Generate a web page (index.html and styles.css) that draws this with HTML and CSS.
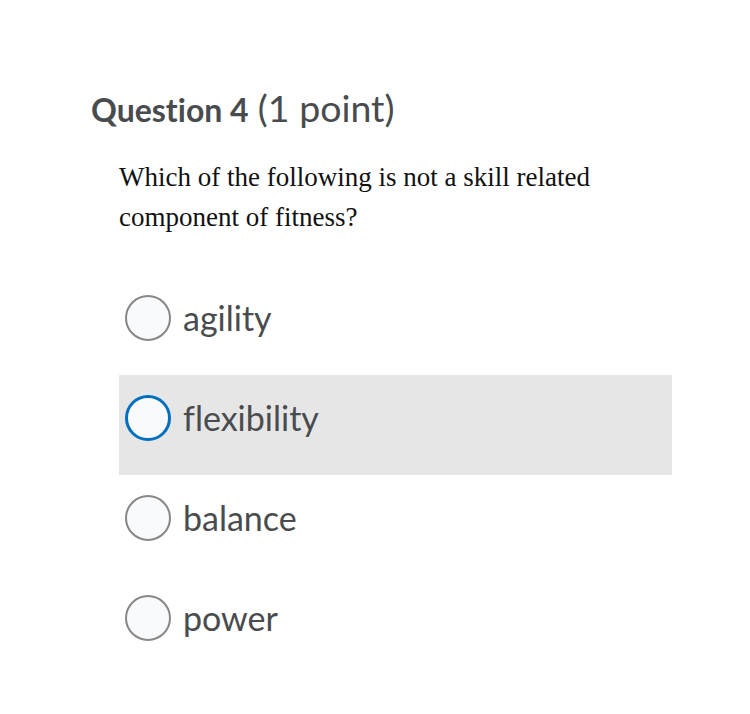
FILE: index.html
```html
<!DOCTYPE html>
<html>
<head>
<meta charset="utf-8">
<link rel="stylesheet" href="styles.css">
</head>
<body>
<div class="page">
  <h2 class="qtitle"><span class="qnum">Question 4</span> <span class="qpts">(1 point)</span></h2>
  <div class="qbody">
    <p class="qtext">Which of the following is not a skill related component of fitness?</p>
    <div class="options">
      <div class="opt"><span class="radio"></span><span class="label">agility</span></div>
      <div class="opt opt-hover"><span class="radio radio-focus"></span><span class="label">flexibility</span></div>
      <div class="opt"><span class="radio"></span><span class="label">balance</span></div>
      <div class="opt"><span class="radio"></span><span class="label">power</span></div>
    </div>
  </div>
</div>
</body>
</html>
```
FILE: styles.css
```css
html, body { margin: 0; padding: 0; background: #fff; }
.page { padding: 84px 0 0 91px; font-variant-ligatures: none; }
.qtitle { margin: 0; font-family: Lato, "Liberation Sans", sans-serif; color: #494c4e; line-height: 48px; font-weight: normal; }
.qnum { font-weight: bold; font-size: 32px; }
.qpts { font-size: 37.5px; margin-left: 3px; }
.qbody { padding-left: 28px; width: 553px; }
.qtext { margin: 20px 0 0 0; font-family: "Liberation Serif", "Times New Roman", serif; font-size: 27px; line-height: 40px; color: #111; width: 490px; }
.options { margin-top: 38px; display: flex; flex-direction: column; }
.opt { height: 100px; display: flex; align-items: flex-start; padding-top: 20px; box-sizing: border-box; }
.opt-hover { background: #e6e6e6; }
.radio { width: 42px; height: 42px; border: 2px solid #878787; border-radius: 50%; background: #f9fafc; margin-left: 6px; flex: none; }
.radio-focus { width: 40px; height: 40px; border: 3px solid #006fbf; }
.label { font-family: Lato, "Liberation Sans", sans-serif; font-size: 34px; color: #494c4e; margin-left: 12px; line-height: 46px; }
```
